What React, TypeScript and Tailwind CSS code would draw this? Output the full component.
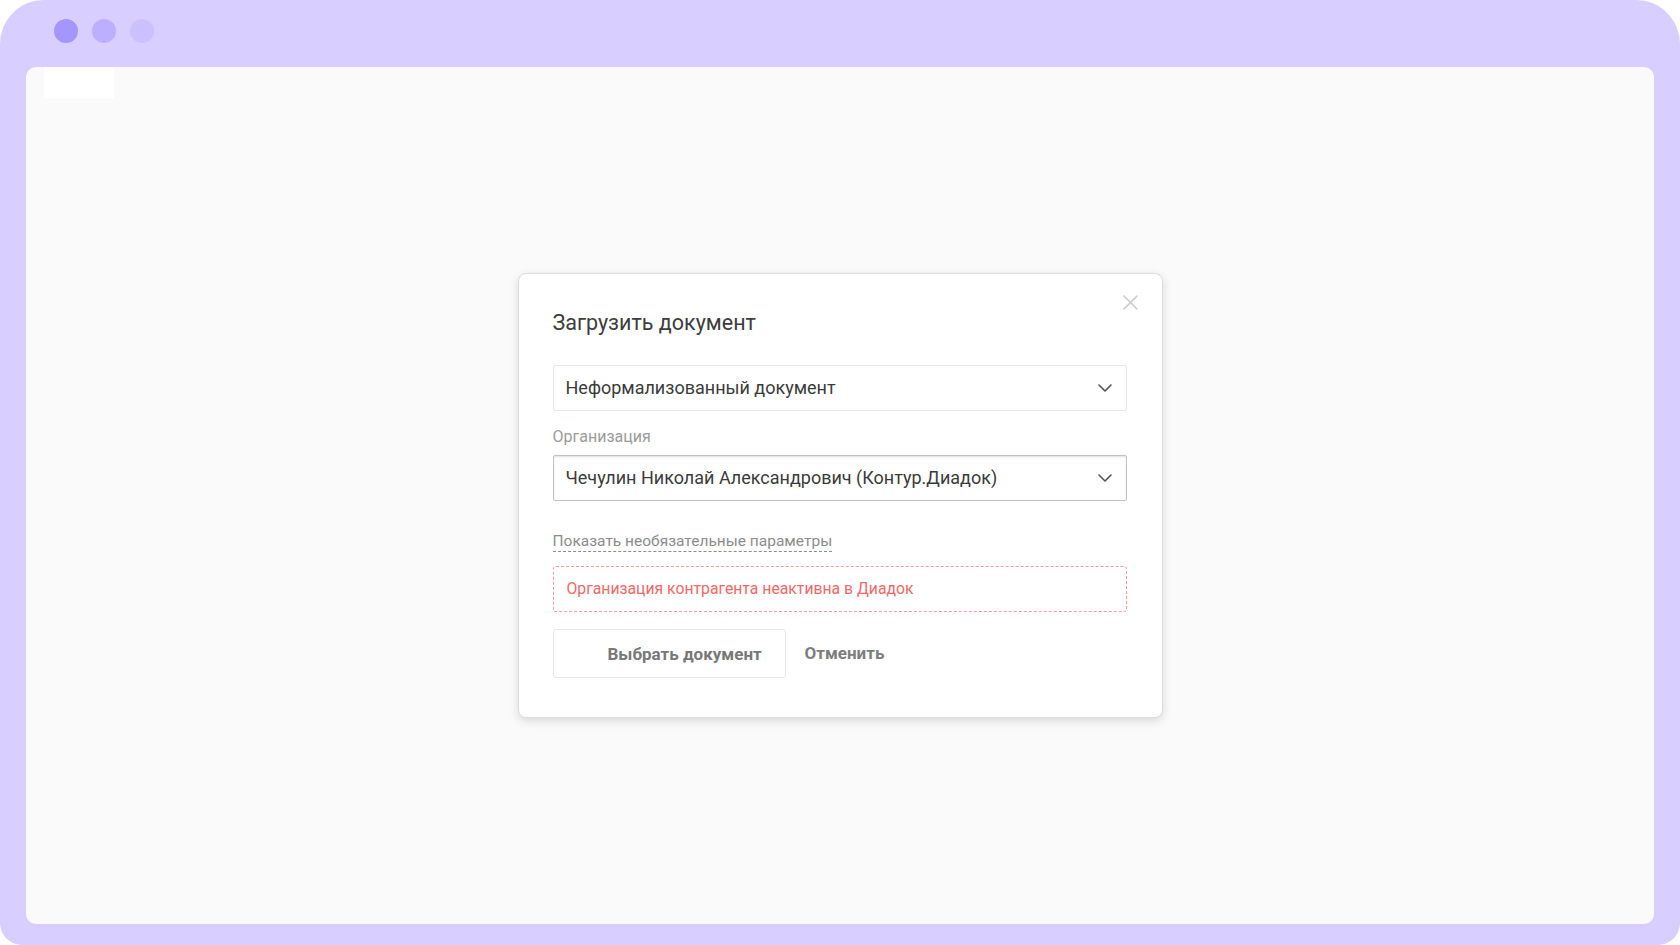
import React from "react";

const font = { fontFamily: "Roboto, 'Liberation Sans', Arial, sans-serif" };

function Chevron() {
  return (
    <svg width="14" height="8" viewBox="0 0 14 8" fill="none" className="shrink-0">
      <path d="M1 1l6 6 6-6" stroke="#555" strokeWidth="1.6" strokeLinecap="round" strokeLinejoin="round" />
    </svg>
  );
}

function Select({ value, active }: { value: string; active?: boolean }) {
  return (
    <div
      className={
        active
          ? "flex items-center justify-between h-[46px] pl-[12px] pr-[14px] rounded-[2px] border border-[#c2c2c2] bg-white shadow-[inset_0_1px_2px_rgba(0,0,0,0.12)]"
          : "flex items-center justify-between h-[46px] pl-[12px] pr-[14px] rounded-[2px] border border-[#e8e8e8] bg-white"
      }
    >
      <span className="text-[18px] leading-[24px] text-[#3b3b3b]">{value}</span>
      <Chevron />
    </div>
  );
}

export default function App() {
  return (
    <div className="w-[1680px] h-[945px] bg-white" style={font}>
      <div className="flex flex-col w-full h-full bg-[#d8ceff] rounded-t-[44px] rounded-b-[22px] px-[26px] pb-[21px]">
        {/* window dots */}
        <div className="flex items-center gap-[14px] h-[67px] pl-[28px] pb-[6px]">
          <span className="w-[24px] h-[24px] rounded-full bg-[#a595ff]" />
          <span className="w-[24px] h-[24px] rounded-full bg-[#bcafff]" />
          <span className="w-[24px] h-[24px] rounded-full bg-[#cbc1ff]" />
        </div>

        {/* page */}
        <div className="relative flex-1 flex items-center justify-center bg-[#fafafa] rounded-[10px]">
          <div className="absolute left-[18px] top-0 w-[70px] h-[31px] bg-white" />

          <div className="relative w-[645px] bg-white border border-[#dcdcdc] rounded-[8px] shadow-[0_3px_10px_rgba(0,0,0,0.13)] pl-[34px] pr-[35px] pt-[35px] pb-[39px]">
            <button className="absolute right-[24px] top-[21px] w-[15px] h-[15px]">
              <svg width="15" height="15" viewBox="0 0 15 15" fill="none">
                <path d="M1 1l13 13M14 1L1 14" stroke="#c9c9c9" strokeWidth="1.6" strokeLinecap="round" />
              </svg>
            </button>

            <h2 className="text-[21.5px] leading-[28px] text-[#3d3d3d] font-normal">Загрузить документ</h2>

            <div className="mt-[28px]">
              <Select value="Неформализованный документ" />
            </div>

            <div className="mt-[16px] text-[16px] leading-[20px] text-[#9b9b9b]">Организация</div>

            <div className="mt-[8px]">
              <Select value="Чечулин Николай Александрович (Контур.Диадок)" active />
            </div>

            <div className="mt-[28px]">
              <span className="inline-block text-[15.5px] leading-[20px] text-[#8c8c8c] border-b border-dashed border-[#8c8c8c]">
                Показать необязательные параметры
              </span>
            </div>

            <div className="mt-[13px] flex items-center h-[46px] px-[13px] rounded-[3px] border border-dashed border-[#f39a9a]">
              <span className="text-[15.75px] leading-[20px] text-[#f06868]">Организация контрагента неактивна в Диадок</span>
            </div>

            <div className="mt-[17px] flex items-center gap-[19px]">
              <button className="w-[233px] h-[49px] text-left pl-[54px] pt-[2px] rounded-[3px] border border-[#e8e8e8] bg-white text-[17px] font-bold text-[#787878]">
                Выбрать документ
              </button>
              <button className="text-[17px] font-bold text-[#7d7d7d]">Отменить</button>
            </div>
          </div>
        </div>
      </div>
    </div>
  );
}
